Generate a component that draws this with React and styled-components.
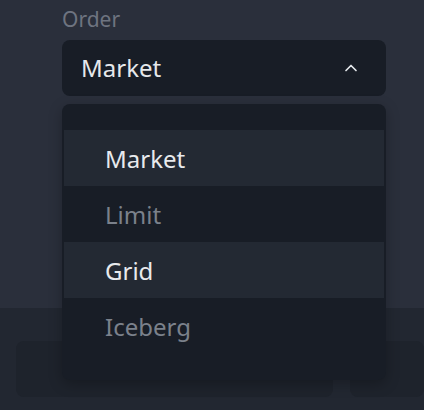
import React from "react";
import styled, { createGlobalStyle } from "styled-components";

const GlobalStyle = createGlobalStyle`
  html, body {
    margin: 0;
    padding: 0;
    background: #222731;
    font-family: "Noto Sans", "Open Sans", sans-serif;
  }
`;

const options = [
  { label: "Market", active: true },
  { label: "Limit", active: false },
  { label: "Grid", active: true },
  { label: "Iceberg", active: false },
];

function ChevronUp() {
  return (
    <svg width="14" height="14" viewBox="0 0 14 14" fill="none">
      <path
        d="M2 9.5 L7 4.5 L12 9.5"
        stroke="#e4e7eb"
        strokeWidth="1.7"
        strokeLinecap="round"
        strokeLinejoin="round"
      />
    </svg>
  );
}

export default function App() {
  return (
    <Page>
      <GlobalStyle />
      <Top>
        <Field>
          <Label>Order</Label>
          <Select>
            <Value>Market</Value>
            <ChevronUp />
          </Select>
          <Menu>
            {options.map((o) => (
              <Option key={o.label} $active={o.active}>
                {o.label}
              </Option>
            ))}
          </Menu>
        </Field>
      </Top>
      <Bottom>
        <Card />
        <Card />
      </Bottom>
    </Page>
  );
}

const Page = styled.div`
  width: 424px;
  height: 410px;
  overflow: hidden;
  display: flex;
  flex-direction: column;
`;

const Top = styled.div`
  height: 308px;
  background: #2a2f3b;
  padding: 0 38px 0 62px;
  box-sizing: border-box;
`;

const Field = styled.div`
  position: relative;
  display: flex;
  flex-direction: column;
`;

const Label = styled.div`
  font-size: 21px;
  line-height: 28px;
  color: #6e7480;
  margin-top: 5px;
  margin-bottom: 7px;
`;

const Select = styled.div`
  height: 56px;
  border-radius: 8px;
  background: #181d26;
  display: flex;
  align-items: center;
  justify-content: space-between;
  padding: 0 28px 0 19px;
`;

const Value = styled.span`
  font-size: 24px;
  color: #e6e8eb;
  line-height: 32px;
`;

const Menu = styled.div`
  position: absolute;
  top: 104px;
  left: 0;
  right: 0;
  height: 276px;
  box-sizing: border-box;
  background: #181d26;
  border-radius: 8px;
  padding: 26px 2px 0;
  box-shadow: 0 4px 14px rgba(0, 0, 0, 0.25);
  z-index: 2;
`;

const Option = styled.div`
  height: 56px;
  display: flex;
  align-items: center;
  padding-left: 41px;
  font-size: 24px;
  color: ${(p) => (p.$active ? "#e8eaed" : "#7b818b")};
  background: ${(p) => (p.$active ? "#232933" : "transparent")};
`;

const Bottom = styled.div`
  flex: 1;
  background: #222731;
  display: grid;
  grid-template-columns: 317px 1fr;
  gap: 17px;
  padding: 33px 0 13px 16px;
`;

const Card = styled.div`
  background: #1e232c;
  border-radius: 8px;
`;
